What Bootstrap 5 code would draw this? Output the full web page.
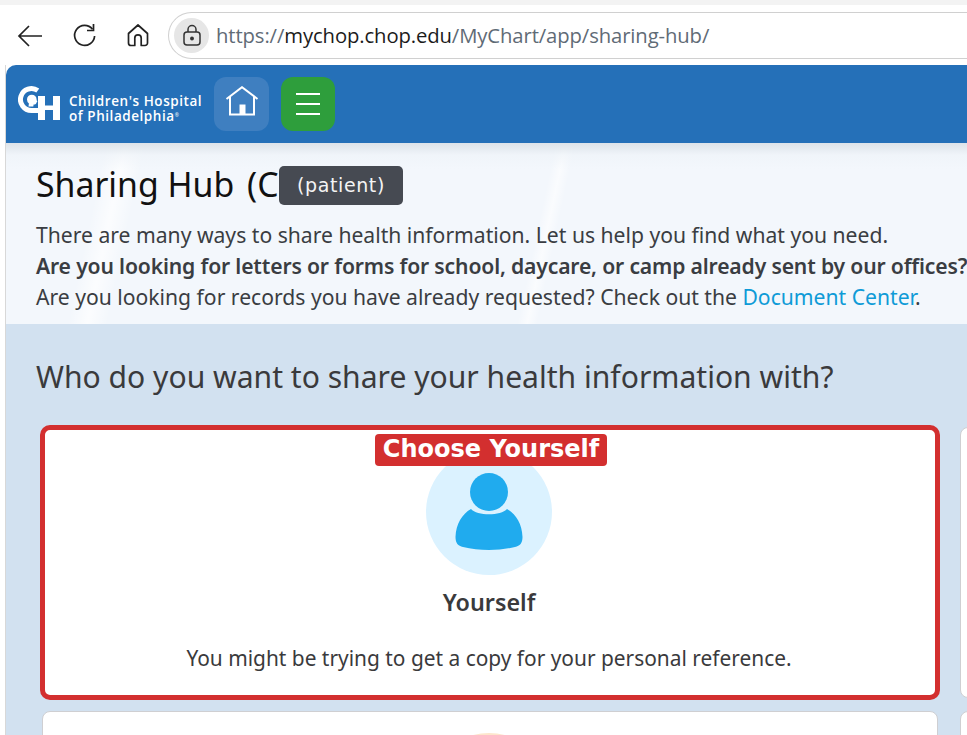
<!DOCTYPE html>
<html lang="en">
<head>
<meta charset="utf-8">
<title>Sharing Hub</title>
<link href="https://cdn.jsdelivr.net/npm/bootstrap@5.3.0/dist/css/bootstrap.min.css" rel="stylesheet">
<style>
html,body{height:735px;overflow:hidden;background:#fff;}
body{font-family:"Noto Sans","Open Sans",sans-serif;color:#3a3a3c;position:relative;width:967px;}
.topstrip{height:5px;background:#f3f3f3;}
.chrome{height:60px;padding:0 0 0 16px;}
.chrome-btn{width:28px;height:28px;flex:none;}
.chrome-back{margin-right:26px;}
.chrome-reload{margin-right:26px;}
.chrome-home{margin-right:16px;}
.addr{flex:1;height:47px;border:1px solid #d0d0d0;border-right:0;border-radius:24px 0 0 24px;padding-left:5px;gap:7px;}
.lockwrap{width:35px;height:35px;border-radius:50%;background:#e6e6e6;}
.urltext{font-family:"Open Sans","Noto Sans",sans-serif;font-size:20.25px;color:#5f6b76;white-space:nowrap;letter-spacing:-.1px;}
.urltext b{font-weight:400;color:#1b1b1b;}
.frame{margin-left:5px;border-left:1px solid #d8d8d8;height:670px;overflow:hidden;}
.hdr{height:78px;background:#2570b8;border-radius:10px 0 0 0;padding-left:12px;}
.logo-text{color:#fff;font-family:"Open Sans",sans-serif;font-weight:600;font-size:13.5px;line-height:15px;margin:10px 0 0 1px;width:134px;white-space:nowrap;letter-spacing:.55px;}
.logo-text sup{font-size:5px;top:-.8em;font-weight:400;}
.sqbtn{width:55px;height:54px;border-radius:12px;}
.sqbtn-home{background:#3f7fc0;margin-left:11px;}
.sqbtn-menu{background:#2e9e3c;margin-left:12px;width:54px;flex-direction:column;gap:7.5px;}
.sqbtn-menu i{display:block;width:24px;height:2.5px;background:#fff;}
.house{margin-bottom:6px;}
.intro{height:181px;padding:18px 0 0 30px;white-space:nowrap;background:linear-gradient(180deg,#dde3e9 0,rgba(238,243,248,.6) 12px,rgba(244,248,252,0) 26px),linear-gradient(102deg,rgba(255,255,255,0) 10%,rgba(255,255,255,.7) 12%,rgba(255,255,255,0) 14%,rgba(255,255,255,0) 55%,rgba(255,255,255,.6) 56%,rgba(255,255,255,0) 57%),#f3f7fc;}
.page-title{font-size:33.8px;line-height:46px;font-weight:400;color:#111;margin:0 0 12px;}
.intro p{font-size:21.13px;line-height:31px;margin:0;color:#3a3d42;}
.intro strong{letter-spacing:-.16px;}
.intro a{color:#0f9bd7;text-decoration:none;}
.mainarea{background:#d2e1f0;height:411px;padding:30px 0 0 30px;}
.ask{font-size:30.08px;line-height:46px;font-weight:400;color:#3a3a3c;margin:0 0 27px;white-space:nowrap;}
.cardgrid{display:grid;grid-template-columns:896px 896px;gap:13px 22px;margin-left:6px;}
.pick{height:271px;background:#fff;border:1px solid #cfcfd2;border-radius:8px;text-align:center;padding:21px 2px 0 0;}
.pick-on{outline:5px solid #d32f2f;outline-offset:-3px;border-color:#d32f2f;}
.avatar{width:126px;height:126px;border-radius:50%;background:#dbf2ff;margin:0 auto 11px;}
.pick h3{font-size:23.3px;line-height:32px;font-weight:600;color:#3a3a3c;margin:0 0 25px;}
.pick p{font-size:20.9px;line-height:30px;margin:0;color:#3a3a3c;}
.avatar-peach{background:#fde6cc;}
.tip{position:absolute;background:#464a52;color:#f4f4f4;border-radius:5px;left:279px;top:166px;width:124px;height:39px;font-family:"DejaVu Sans",sans-serif;font-size:19px;letter-spacing:.6px;line-height:38px;text-align:center;}
.callout{position:absolute;left:375px;top:434px;width:232px;height:32px;background:#d32f2f;border-radius:4px;color:#fff;font-family:"DejaVu Sans",sans-serif;font-weight:700;font-size:24px;line-height:31px;text-align:center;white-space:nowrap;}
</style>
</head>
<body>
<div class="topstrip"></div>
<div class="chrome d-flex align-items-center">
  <svg class="chrome-btn chrome-back" viewBox="0 0 28 28" fill="none" stroke="#222" stroke-width="1.7"><path d="M26 15H3M13 5 3 15l10 10"/></svg>
  <svg class="chrome-btn chrome-reload" viewBox="0 0 28 28" fill="none" stroke="#222" stroke-width="1.7"><path d="M22.500 8.200A10 10 0 1 0 24.600 15"/><path d="M23.500 3v6.500H17"/></svg>
  <svg class="chrome-btn chrome-home" viewBox="0 0 28 28" fill="none" stroke="#222" stroke-width="1.7" stroke-linejoin="round"><path d="M14 4 4.500 12.500V22a2.500 2.500 0 0 0 2.500 2.500h3.800V17a3.200 3.200 0 0 1 6.400 0v7.500H21a2.500 2.500 0 0 0 2.500-2.500v-9.500z"/></svg>
  <div class="addr d-flex align-items-center">
    <div class="lockwrap d-flex align-items-center justify-content-center">
      <svg width="20" height="22" viewBox="0 0 20 22" fill="none" stroke="#333" stroke-width="1.5"><rect x="2" y="8" width="16" height="13" rx="3"/><path d="M6 8V5.500a4 4 0 0 1 8 0V8"/><circle cx="10" cy="14.500" r="1.200" fill="#333"/></svg>
    </div>
    <span class="urltext">https://<b>mychop.chop.edu</b>/MyChart/app/sharing-hub/</span>
  </div>
</div>
<div class="frame">
  <header class="hdr d-flex align-items-center">
    <svg width="50" height="38" viewBox="0 0 50 38" fill="none">
      <path d="M19.800 5.500A11 11 0 1 0 13.500 25.500H24" stroke="#fff" stroke-width="5"/>
      <path d="M9 14.500a4.800 4.800 0 0 1 9.600 0c0 .9.700 1.600.7 2.200s-.9.700-.9 1.100c0 1.400-1.400 1.900-2.800 1.700l-.3 2H10.500l.4-3a5 5 0 0 1-1.900-4z" fill="#fff"/>
      <path d="M20 11h7v24h-7zM35 11h7v24h-7z" fill="#fff"/>
      <path d="M24 20.500h14v4.500H24z" fill="#fff"/>
    </svg>
    <div class="logo-text">Children's Hospital<br>of Philadelphia<sup>®</sup></div>
    <div class="sqbtn sqbtn-home d-flex align-items-center justify-content-center">
      <svg class="house" width="34" height="30" viewBox="0 0 34 30" fill="none" stroke="#fff" stroke-width="2"><path d="M1.500 13 17 1.200 32.500 13"/><path d="M5 10.500V28.500h24V10.500"/><path d="M14.500 28.500V18.500h6v10z" fill="#fff" stroke="none"/></svg>
    </div>
    <div class="sqbtn sqbtn-menu d-flex align-items-center justify-content-center"><i></i><i></i><i></i></div>
  </header>
  <section class="intro">
    <h1 class="page-title">Sharing Hub <span class="ms-1">(C</span></h1>
    <p>There are many ways to share health information. Let us help you find what you need.</p>
    <p><strong class="fw-semibold">Are you looking for letters or forms for school, daycare, or camp already sent by our offices?</strong></p>
    <p>Are you looking for records you have already requested? Check out the <a href="#">Document Center</a>.</p>
  </section>
  <section class="mainarea">
    <h2 class="ask">Who do you want to share your health information with?</h2>
    <div class="cardgrid">
      <div class="pick pick-on">
        <div class="avatar d-flex align-items-center justify-content-center">
          <svg width="68" height="80" viewBox="0 0 68 80"><circle cx="34" cy="20" r="19" fill="#20abee"/><path d="M16 37C22 44 46 44 52 37 61 42 67 52 67.500 65 67.500 71 65 74 60 75 44 79 24 79 8 75 3 74 .5 71 .5 65 1 52 7 42 16 37z" fill="#20abee"/></svg>
        </div>
        <h3>Yourself</h3>
        <p>You might be trying to get a copy for your personal reference.</p>
      </div>
      <div class="pick"></div>
      <div class="pick"><div class="avatar avatar-peach"></div></div>
      <div class="pick"></div>
    </div>
  </section>
</div>
<div class="tip">(patient)</div>
<div class="callout">Choose Yourself</div>
<script src="https://cdn.jsdelivr.net/npm/bootstrap@5.3.0/dist/js/bootstrap.bundle.min.js"></script>
</body>
</html>
